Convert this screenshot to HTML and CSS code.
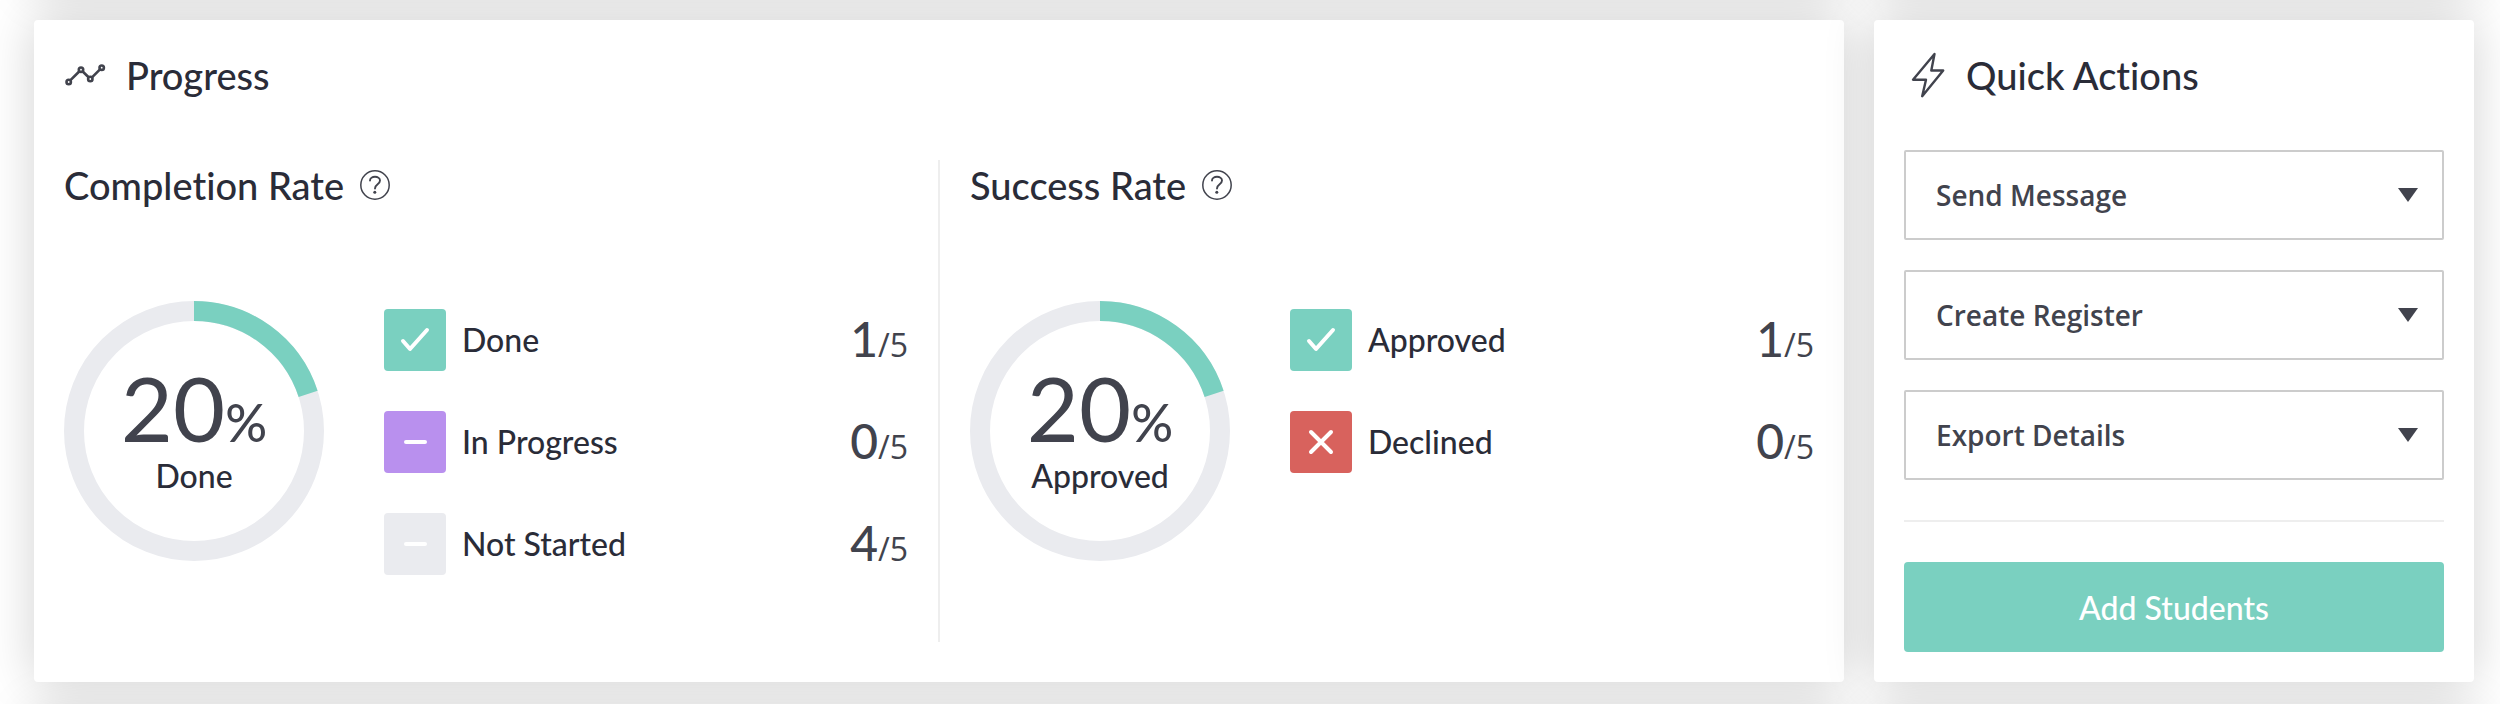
FILE: index.html
```html
<!DOCTYPE html>
<html lang="en">
<head>
    <meta charset="UTF-8">
    <meta name="viewport" content="width=device-width, initial-scale=1.0">
    <title>Progress</title>
    <link rel="stylesheet" href="styles.css">
</head>
<body>
    <main class="dashboard">
        <section class="card progress-card">
            <h2 class="card-title">
                <svg class="title-icon" width="42" height="42" viewBox="0 0 42 42" fill="none" stroke="#41434d" stroke-width="2.600">
                    <path d="M6.500 26.200L15.200 17.500M18.700 17.500L24.600 23.300M28 23.300L36 15.400"/>
                    <circle cx="4.700" cy="28" r="2.200"/>
                    <circle cx="17" cy="15.700" r="2.200"/>
                    <circle cx="26.300" cy="25" r="2.200"/>
                    <circle cx="37.700" cy="13.700" r="2.200"/>
                </svg>
                Progress
            </h2>

            <div class="rates">
                <div class="rate">
                    <h3 class="rate-title">
                        Completion Rate
                        <button class="help" type="button" aria-label="About completion rate">
                            <svg width="30" height="30" viewBox="0 0 30 30" fill="none" stroke="#41434d">
                                <circle cx="15" cy="15" r="14.200" stroke-width="1.500"/>
                                <path d="M10 10.500C10 5.500 20 5.500 20 10.500C20 14.500 15 14 15 18.500" stroke-width="1.900" stroke-linecap="round"/>
                                <circle cx="14.800" cy="22.300" r="1.500" fill="#41434d" stroke="none"/>
                            </svg>
                        </button>
                    </h3>
                    <div class="rate-body">
                        <div class="donut">
                            <svg class="donut-ring" viewBox="0 0 260 260" fill="none" stroke-width="20">
                                <circle cx="130" cy="130" r="120" stroke="#eaebef"/>
                                <circle cx="130" cy="130" r="120" stroke="#7ad0c0" pathLength="100" stroke-dasharray="20 80" transform="rotate(-90 130 130)"/>
                            </svg>
                            <div class="donut-text">
                                <p class="donut-value">20<span>%</span></p>
                                <p class="donut-label">Done</p>
                            </div>
                        </div>
                        <ul class="legend">
                            <li>
                                <span class="status green"><svg width="62" height="62" viewBox="0 0 62 62"><path d="M19 32L26 40L43 21"/></svg></span>
                                <span class="name">Done</span>
                                <span class="count"><b>1</b>/5</span>
                            </li>
                            <li>
                                <span class="status purple"><svg width="62" height="62" viewBox="0 0 62 62"><path d="M22 31H41"/></svg></span>
                                <span class="name">In Progress</span>
                                <span class="count"><b>0</b>/5</span>
                            </li>
                            <li>
                                <span class="status grey"><svg width="62" height="62" viewBox="0 0 62 62"><path d="M22 31H41"/></svg></span>
                                <span class="name">Not Started</span>
                                <span class="count"><b>4</b>/5</span>
                            </li>
                        </ul>
                    </div>
                </div>

                <div class="rate">
                    <h3 class="rate-title">
                        Success Rate
                        <button class="help" type="button" aria-label="About success rate">
                            <svg width="30" height="30" viewBox="0 0 30 30" fill="none" stroke="#41434d">
                                <circle cx="15" cy="15" r="14.200" stroke-width="1.500"/>
                                <path d="M10 10.500C10 5.500 20 5.500 20 10.500C20 14.500 15 14 15 18.500" stroke-width="1.900" stroke-linecap="round"/>
                                <circle cx="14.800" cy="22.300" r="1.500" fill="#41434d" stroke="none"/>
                            </svg>
                        </button>
                    </h3>
                    <div class="rate-body">
                        <div class="donut">
                            <svg class="donut-ring" viewBox="0 0 260 260" fill="none" stroke-width="20">
                                <circle cx="130" cy="130" r="120" stroke="#eaebef"/>
                                <circle cx="130" cy="130" r="120" stroke="#7ad0c0" pathLength="100" stroke-dasharray="20 80" transform="rotate(-90 130 130)"/>
                            </svg>
                            <div class="donut-text">
                                <p class="donut-value">20<span>%</span></p>
                                <p class="donut-label">Approved</p>
                            </div>
                        </div>
                        <ul class="legend">
                            <li>
                                <span class="status green"><svg width="62" height="62" viewBox="0 0 62 62"><path d="M19 32L26 40L43 21"/></svg></span>
                                <span class="name">Approved</span>
                                <span class="count"><b>1</b>/5</span>
                            </li>
                            <li>
                                <span class="status red"><svg width="62" height="62" viewBox="0 0 62 62"><path d="M21 21L41 41M41 21L21 41"/></svg></span>
                                <span class="name">Declined</span>
                                <span class="count"><b>0</b>/5</span>
                            </li>
                        </ul>
                    </div>
                </div>
            </div>
        </section>

        <section class="card actions-card">
            <h2 class="card-title">
                <svg class="title-icon" width="42" height="60" viewBox="0 0 42 60" fill="none" stroke="#41434d" stroke-width="2.400" stroke-linejoin="round">
                    <path d="M30.500 9L9 34.700H22L18.200 51.200L39.200 25.500H27.300Z"/>
                </svg>
                Quick Actions
            </h2>
            <div class="actions">
                <select aria-label="Send Message"><option>Send Message</option></select>
                <select aria-label="Create Register"><option>Create Register</option></select>
                <select aria-label="Export Details"><option>Export Details</option></select>
            </div>
            <hr>
            <button class="add-btn" type="button">Add Students</button>
        </section>
    </main>
</body>
</html>
```
FILE: styles.css
```css
* {
    box-sizing: border-box;
}

body {
    margin: 0;
    background-color: white;
    color: #2a2c38;
    font-family: Lato, sans-serif;
    font-weight: 500;
    font-variant-ligatures: none;
}

h2, h3, p, ul {
    margin: 0;
    padding: 0;
}

.dashboard {
    display: flex;
    gap: 30px;
    padding: 20px 26px 22px 34px;
    overflow: hidden;
}

.card {
    padding: 30px;
    background-color: white;
    border-radius: 4px;
    box-shadow: 0 0 50px rgba(0,0,0,0.18), 0 -692px 50px rgba(0,0,0,0.18), 0 692px 50px rgba(0,0,0,0.18);
}

.progress-card {
    flex: 1;
}

.actions-card {
    flex: 0 0 600px;
}

.card-title {
    display: flex;
    align-items: center;
    gap: 20px;
    height: 50px;
    font-size: 38px;
    font-weight: 500;
}

.rates {
    display: flex;
    margin-top: 60px;
}

.rate {
    flex: 1;
    min-height: 482px;
}

.rate + .rate {
    margin-left: 30px;
    padding-left: 30px;
    border-left: 2px solid #eee;
}

.rate-title {
    display: flex;
    align-items: center;
    gap: 16px;
    height: 50px;
    font-size: 38px;
    font-weight: 500;
}

.help {
    all: unset;
    display: flex;
    cursor: pointer;
}

.rate-body {
    display: flex;
    align-items: flex-start;
    gap: 60px;
    margin-top: 91px;
}

.donut {
    position: relative;
    width: 260px;
    height: 260px;
}

.donut-ring {
    display: block;
    width: 100%;
}

.donut-text {
    position: absolute;
    inset: 0;
    display: flex;
    flex-direction: column;
    align-items: center;
    justify-content: center;
    padding-bottom: 2px;
}

.donut-value {
    color: #41434d;
    font-size: 90px;
    font-weight: 400;
    line-height: 76px;
}

.donut-value span {
    font-size: 52px;
    font-weight: 500;
}

.donut-label {
    font-size: 32px;
    line-height: 32px;
}

.legend {
    flex: 1;
    display: flex;
    flex-direction: column;
    gap: 40px;
    padding-top: 8px;
    list-style: none;
}

.legend li {
    display: flex;
    align-items: center;
    gap: 16px;
    height: 62px;
}

.status {
    height: 62px;
    border-radius: 4px;
}

.status svg {
    display: block;
    fill: none;
    stroke: white;
    stroke-width: 4;
    stroke-linecap: round;
    stroke-linejoin: round;
}

.green {
    background-color: #7ad0c0;
}

.purple {
    background-color: #b990ee;
}

.grey {
    background-color: #eaebef;
}

.red {
    background-color: #d8625d;
}

.name {
    flex: 1;
    font-size: 32px;
    line-height: 40px;
}

.count {
    padding-top: 4px;
    color: #41434d;
    font-family: "Open Sans", sans-serif;
    font-size: 32px;
    font-weight: 400;
    line-height: 60px;
}

.count b {
    font-family: Lato, sans-serif;
    font-size: 48px;
    font-weight: 500;
}

.actions {
    display: flex;
    flex-direction: column;
    gap: 30px;
    margin-top: 50px;
}

.actions select {
    appearance: none;
    width: 100%;
    height: 90px;
    padding: 0 30px;
    border: 2px solid #ccc;
    border-radius: 2px;
    /* dropdown arrow */
    background: white url("data:image/svg+xml,%3Csvg xmlns='http://www.w3.org/2000/svg' width='20' height='14'%3E%3Cpath d='M0 0h20L10 14z' fill='%2341434d'/%3E%3C/svg%3E") no-repeat right 24px center;
    color: #41434d;
    font-family: "Open Sans", sans-serif;
    font-size: 28px;
    font-weight: 600;
}

hr {
    height: 2px;
    margin: 40px 0;
    border: 0;
    background-color: #eee;
}

.add-btn {
    width: 100%;
    height: 90px;
    border: 0;
    border-radius: 4px;
    background-color: #7ad0c0;
    color: white;
    font-family: Lato, sans-serif;
    font-size: 32px;
    font-weight: 500;
    cursor: pointer;
}
```
